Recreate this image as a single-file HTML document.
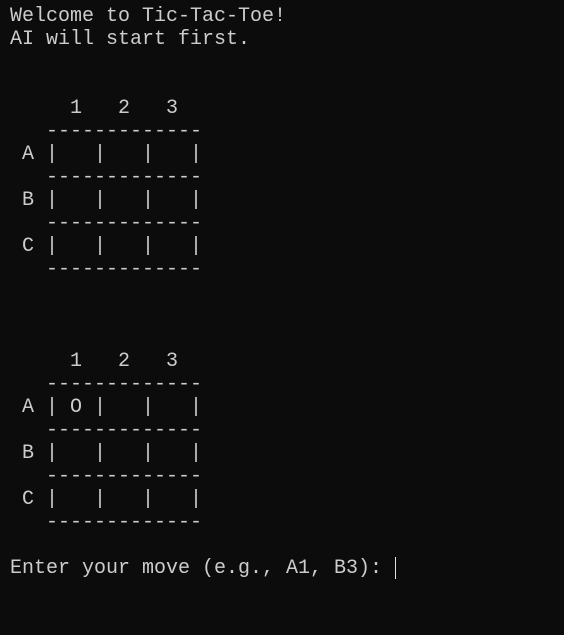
<!DOCTYPE html>
<html><head><meta charset="utf-8"><style>
html,body{margin:0;padding:0;background:#0c0c0c;width:564px;height:635px;overflow:hidden}
pre{margin:0;position:absolute;left:10px;top:5px;font-family:"Liberation Mono",monospace;font-size:20px;line-height:23px;color:#cccccc}
.cur{display:inline-block;width:1px;height:22px;background:#e0e0e0;vertical-align:top;margin-left:1px}
</style></head><body><pre>Welcome to Tic-Tac-Toe!
AI will start first.


     1   2   3
   -------------
 A |   |   |   |
   -------------
 B |   |   |   |
   -------------
 C |   |   |   |
   -------------



     1   2   3
   -------------
 A | O |   |   |
   -------------
 B |   |   |   |
   -------------
 C |   |   |   |
   -------------

Enter your move (e.g., A1, B3): <span class="cur"></span></pre></body></html>
